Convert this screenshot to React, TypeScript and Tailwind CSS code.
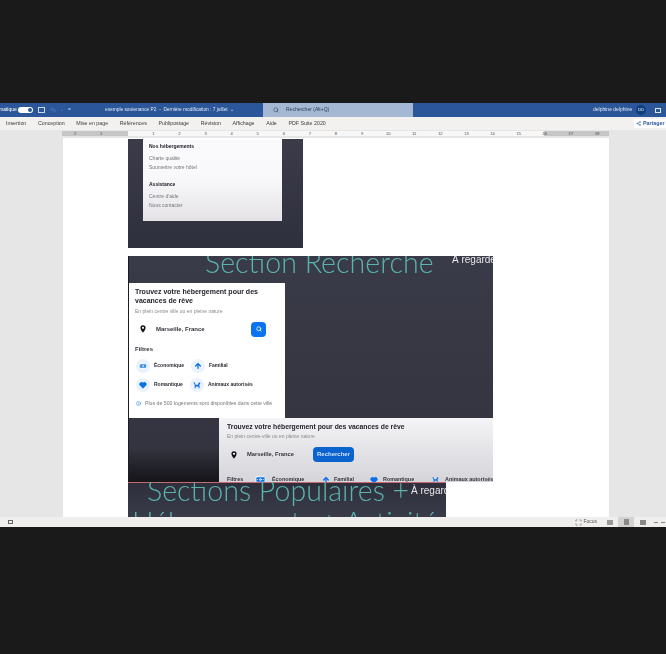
import { Search, Info, Banknote, ArrowUp, Heart, Share2, Undo2, Scan } from "lucide-react";

const tabs = ["Insertion", "Conception", "Mise en page", "Références", "Publipostage", "Révision", "Affichage", "Aide", "PDF Suite 2020"];

const sans = "font-['Liberation_Sans',sans-serif]";
const heading = "font-['Lato',sans-serif] font-light text-[28.6px] leading-[32px] text-[#59b3ae] whitespace-nowrap blur-[0.3px]";

function Ruler()
{
	const numbers = [2, 1, 0, 1, 2, 3, 4, 5, 6, 7, 8, 9, 10, 11, 12, 13, 14, 15, 16, 17, 18];
	return (
		<div className="relative h-[8px] bg-[#e6e6e6] flex pl-[62px] pr-[57px]">
			<div className="h-[5px] mt-[1px] flex-1 flex bg-[#c6c6c6] overflow-hidden">
				<div className="w-[66px] shrink-0" />
				<div className="w-[416px] shrink-0 bg-[#f7f7f7]" />
			</div>
			<div className="absolute left-[62px] top-[1px] h-[5px] flex">
				{ numbers.map( ( n, i ) => (
					<span key={ i } className="w-[26.1px] shrink-0 text-center text-[4px] leading-[5px] text-[#444]">{ n || "" }</span>
				) ) }
			</div>
		</div>
	);
}

function Pin( { className }: { className: string } )
{
	return (
		<svg viewBox="0 0 12 16" className={ className }>
			<path d="M6 0.5a5.2 5.2 0 0 0-5.2 5.2C0.8 9.5 6 15.5 6 15.5s5.2-6 5.2-9.8A5.2 5.2 0 0 0 6 0.5z" fill="#111" />
			<circle cx="6" cy="5.7" r="2.2" fill="#fff" />
		</svg>
	);
}

function DogIcon( { size }: { size: number } )
{
	return (
		<svg viewBox="0 0 16 16" width={ size } height={ size } fill="#0a6fe8">
			<path d="M1 3l2-.5 2 5h5l1.500-4.500h2l1.500 2-2 1.500v8h-2v-3.500H5.500v3.500h-2V8.500z" />
		</svg>
	);
}

function Chip( { icon, label, className }: { icon: React.ReactNode; label: string; className: string } )
{
	return (
		<div className={ `flex items-center gap-[4px] h-[15px] rounded-full bg-white ${ className }` }>
			<span className="w-[14px] h-[14px] rounded-full bg-[#eaf2fe] flex items-center justify-center text-[#0a6fe8]">{ icon }</span>
			<span className="text-[5px] font-semibold text-[#2a2a33] whitespace-nowrap">{ label }</span>
		</div>
	);
}

export default function App()
{
	return (
		<div className={ `relative w-[666px] h-[654px] bg-[#1a1a1a] overflow-hidden flex flex-col ${ sans }` }>
			<div className="h-[103px] shrink-0" />

			{/* title bar */}
			<div className="h-[14px] shrink-0 bg-[#2b579a] flex items-center text-white text-[5px] blur-[0.3px]">
				<span className="ml-[-1px] w-[19px]">matique</span>
				<span className="w-[15px] h-[6px] rounded-full bg-white flex items-center justify-end pr-[1px]">
					<span className="w-[4px] h-[4px] rounded-full bg-[#2b579a]" />
				</span>
				<span className="ml-[5px] w-[7px] h-[6px] border border-[#cdd7e8]" />
				<Undo2 size={ 6 } className="ml-[5px] text-[#6f8bb8]" />
				<span className="ml-[4px] w-[8px] text-[#6f8bb8]">⌄</span>
				<span className="w-[37px] text-[#c5d2e6]">=</span>
				<span className="w-[158px] text-[4.8px] text-[#dfe7f3] whitespace-nowrap">exemple soutenance P2 &nbsp;-&nbsp; Dernière modification : 7 juillet &nbsp;⌄</span>
				<div className="w-[150px] h-full bg-[#a5b8d3] flex items-center text-[#2d3b52]">
					<Search size={ 6 } className="ml-[10px] mr-[7px]" />
					<span>Rechercher (Alt+Q)</span>
				</div>
				<span className="ml-[180px] text-[#dfe7f3] whitespace-nowrap">delphine delphine</span>
				<span className="ml-[4px] w-[10px] h-[10px] shrink-0 rounded-full bg-[#0e3f80] text-[4px] text-center leading-[10px]">DD</span>
				<span className="ml-[9px] w-[6px] h-[5px] shrink-0 border border-[#dfe7f3]" />
			</div>

			{/* ribbon tabs */}
			<div className="h-[13px] shrink-0 bg-[#f3f1ef] flex items-center text-[5.3px] text-[#3c3c3c] blur-[0.25px]">
				<div className="flex gap-[11.6px] pl-[6px] whitespace-nowrap">
					{ tabs.map( tab => <span key={ tab }>{ tab }</span> ) }
				</div>
				<div className="ml-auto flex items-center gap-[2px] h-[9px] w-[32px] pl-[2px] bg-white text-[#2b579a] font-semibold whitespace-nowrap">
					<Share2 size={ 5 } />
					<span>Partager</span>
				</div>
			</div>

			<Ruler />

			{/* workspace */}
			<div className="relative h-[379px] shrink-0 bg-[#e6e6e6] flex pl-[63px] pr-[57px] overflow-hidden">
				<div className="w-[546px] bg-white pl-[65px] flex flex-col">
					<div className="mt-[1px] w-[175px] h-[109px] shrink-0 bg-gradient-to-b from-[#3b3b49] to-[#2f303d] pl-[15px]">
						<div className="w-[139px] h-[82px] bg-gradient-to-b from-[#fbfafc] via-[#f8f7f9] to-[#e4e2e4] pl-[6px] pt-[4px] text-[5px] blur-[0.35px]">
							<p className="font-bold text-[#20202a] leading-[6px]">Nos hébergements</p>
							<p className="mt-[6px] leading-[6px] text-[#777]">Charte qualité</p>
							<p className="mt-[3px] leading-[6px] text-[#777]">Soumettre votre hôtel</p>
							<p className="mt-[11px] font-bold text-[#20202a] leading-[6px]">Assistance</p>
							<p className="mt-[6px] leading-[6px] text-[#777]">Centre d'aide</p>
							<p className="mt-[3px] leading-[6px] text-[#777]">Nous contacter</p>
						</div>
					</div>

					<div className="relative mt-[8px] w-[365px] h-[226px] shrink-0 bg-gradient-to-b from-[#3a3b48] via-[#33343f] via-85% to-[#15151a] overflow-hidden border-l-[1px] border-[#1c1c22]">
						<span className={ `absolute left-[76px] top-[-10px] ${ heading }` }>Section Recherche</span>
						<span className="absolute left-[323px] top-[-3px] text-[10px] leading-[14px] text-[#e8e8ec] whitespace-nowrap blur-[0.3px]">À regarder</span>

						{/* first capture */}
						<div className="absolute left-0 top-[27px] w-[156px] h-[135px] bg-white pl-[6px] pt-[4px] blur-[0.35px]">
							<p className="text-[7px] leading-[9px] font-bold text-[#23232c] w-[135px]">Trouvez votre hébergement pour des vacances de rêve</p>
							<p className="mt-[3px] text-[5px] leading-[6px] text-[#8a8a90]">En plein centre ville ou en pleine nature</p>
							<div className="mt-[7px] flex items-center h-[16px]">
								<Pin className="ml-[5px] w-[6px] h-[8px]" />
								<span className="ml-[10px] text-[6px] font-bold text-[#33333b] w-[95px]">Marseille, France</span>
								<span className="w-[15px] h-[15px] rounded-[4px] bg-[#0a74f0] flex items-center justify-center text-white">
									<Search size={ 6 } strokeWidth={ 3 } />
								</span>
							</div>
							<p className="mt-[9px] text-[6px] leading-[7px] font-bold text-[#33333b]">Filtres</p>
							<div className="mt-[5px] flex gap-[3px]">
								<Chip className="w-[53px] pl-[1px]" label="Économique" icon={ <Banknote size={ 8 } fill="#0a6fe8" stroke="#fff" /> } />
								<Chip className="w-[40px]" label="Familial" icon={ <ArrowUp size={ 8 } strokeWidth={ 4 } /> } />
							</div>
							<div className="mt-[4px] flex gap-[3px]">
								<Chip className="w-[52px] pl-[1px]" label="Romantique" icon={ <Heart size={ 8 } fill="#0a6fe8" /> } />
								<Chip className="w-[64px]" label="Animaux autorisés" icon={ <DogIcon size={ 8 } /> } />
							</div>
							<div className="mt-[8px] flex items-center gap-[4px] text-[5.2px] text-[#777] whitespace-nowrap">
								<Info size={ 5 } className="ml-[1px] text-[#0a6fe8]" />
								<span>Plus de 500 logements sont disponibles dans cette ville</span>
							</div>
						</div>

						{/* second capture */}
						<div className="absolute left-[90px] top-[162px] w-[275px] h-[64px] overflow-hidden bg-gradient-to-b from-[#f4f4f6] to-[#d4d4da] pl-[8px] pt-[4px] blur-[0.35px]">
							<p className="text-[6.8px] leading-[9px] font-bold text-[#23232c] whitespace-nowrap">Trouvez votre hébergement pour des vacances de rêve</p>
							<p className="mt-[2px] text-[5px] leading-[6px] text-[#8a8a90]">En plein centre-ville ou en pleine nature</p>
							<div className="mt-[8px] flex items-center h-[15px]">
								<Pin className="ml-[4px] w-[6px] h-[8px]" />
								<span className="ml-[10px] w-[66px] text-[5.8px] font-bold text-[#33333b]">Marseille, France</span>
								<span className="w-[41px] h-[15px] rounded-[4px] bg-[#0a63cf] text-center text-[6px] leading-[15px] font-semibold text-[#cfe2fa]">Rechercher</span>
							</div>
							<div className="mt-[12px] flex items-center text-[5.4px] font-semibold text-[#33333b] whitespace-nowrap">
								<span className="w-[28px]">Filtres</span>
								<Banknote size={ 11 } fill="#0a6fe8" stroke="#fff" />
								<span className="ml-[6px] w-[50px]">Économique</span>
								<ArrowUp size={ 8 } strokeWidth={ 4 } className="text-[#0a6fe8]" />
								<span className="ml-[4px] w-[36px]">Familial</span>
								<Heart size={ 8 } fill="#0a6fe8" className="text-[#0a6fe8]" />
								<span className="ml-[5px] w-[49px]">Romantique</span>
								<DogIcon size={ 7 } />
								<span className="ml-[6px]">Animaux autorisés</span>
							</div>
						</div>
					</div>

					<div className="relative w-[318px] flex-1 bg-gradient-to-b from-[#2e2f3b] to-[#3a3b49] overflow-hidden">
						<div className="absolute left-0 w-[318px] top-0 h-[1px] bg-[#c46a70]" />
						<span className={ `absolute left-[19px] top-[-8px] ${ heading }` }>Sections Populaires +</span>
						<span className="absolute left-[283px] top-[2px] text-[10px] leading-[14px] text-[#e8e8ec] whitespace-nowrap blur-[0.3px]">À regarder</span>
						<span className={ `absolute left-[4px] top-[24px] ${ heading }` }>Hébergements + Activités</span>
					</div>
				</div>
			</div>

			{/* status bar */}
			<div className="h-[10px] shrink-0 bg-[#f1efed] flex items-center text-[5px] text-[#555] blur-[0.25px]">
				<span className="ml-[8px] w-[5px] h-[4px] border border-[#666]" />
				<Scan size={ 7 } className="ml-auto mr-[1px]" />
				<span>Focus</span>
				<span className="ml-[10px] w-[6px] h-[5px] bg-[#999]" />
				<span className="ml-[5px] w-[16px] h-full bg-[#d4d2d0] flex items-center justify-center">
					<span className="w-[5px] h-[6px] bg-[#8a8a8a]" />
				</span>
				<span className="ml-[6px] w-[6px] h-[5px] bg-[#888]" />
				<span className="ml-[8px] w-[4px] h-[1px] bg-[#888]" />
				<span className="ml-[3px] mr-[1px] w-[4px] h-[1px] bg-[#888]" />
			</div>
		</div>
	);
}
